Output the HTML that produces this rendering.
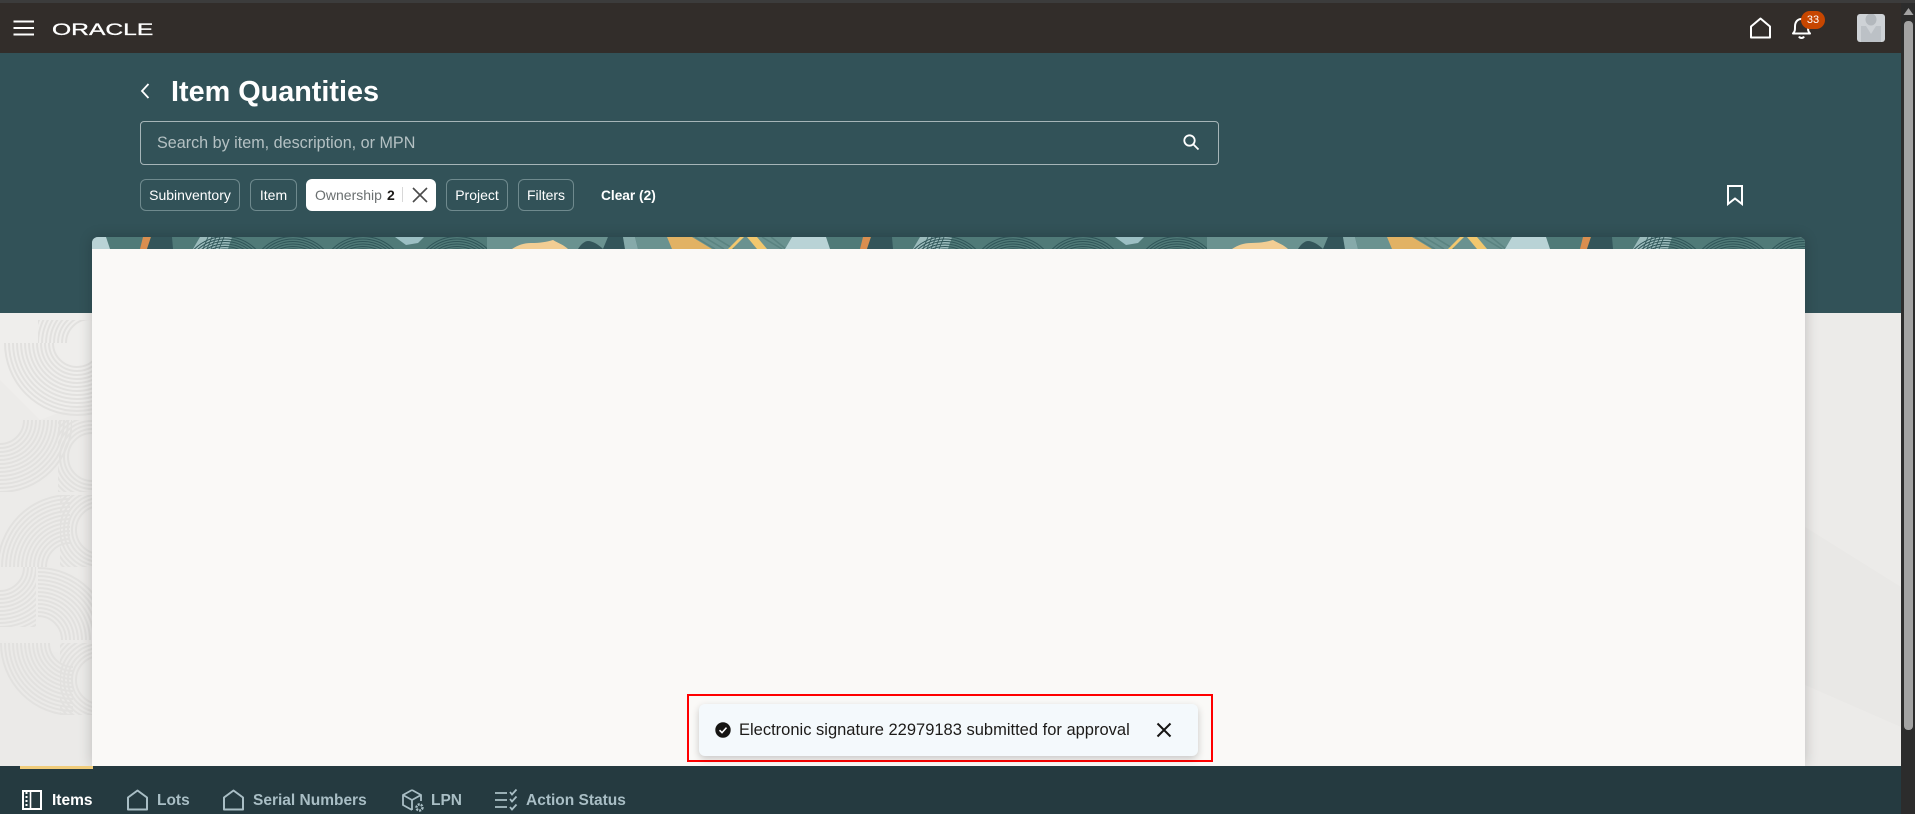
<!DOCTYPE html>
<html lang="en">
<head>
<meta charset="utf-8">
<title>Item Quantities</title>
<style>
html,body{margin:0;padding:0;width:1915px;height:814px;overflow:hidden;background:#ecebe9;font-family:"Liberation Sans",Arial,sans-serif}
.a{position:absolute;white-space:nowrap}
#stage{position:relative;width:1915px;height:814px;overflow:hidden}
.chip{position:absolute;top:179px;height:30px;border:1px solid #6f8a8e;border-radius:6px;box-sizing:content-box;color:#fff;font-size:14px;line-height:30px;text-align:center;white-space:nowrap}
.tab{position:absolute;top:790px;line-height:22px;font-size:15.5px;font-weight:bold;color:#a9bec5;white-space:nowrap}
</style>
</head>
<body>
<div id="stage">
  <!-- page background -->
  <div class="a" style="left:0;top:313px;width:1901px;height:453px;background:#ecebe9"></div>
  <svg class="a" style="left:0;top:313px" width="1901" height="453" viewBox="0 313 1901 453">
    <defs>
      <g id="rings" fill="none" stroke="#e2e1df" stroke-width="2">
        <circle r="24"/><circle r="28"/><circle r="32"/><circle r="36"/><circle r="40"/><circle r="44"/><circle r="48"/><circle r="52"/><circle r="56"/><circle r="60"/><circle r="64"/><circle r="68"/><circle r="72"/>
      </g>
      <clipPath id="l1"><rect x="0" y="343" width="77" height="75"/></clipPath>
      <clipPath id="l2"><rect x="0" y="420" width="72" height="72"/></clipPath>
      <clipPath id="l3"><rect x="0" y="495" width="70" height="72"/></clipPath>
      <clipPath id="l4"><rect x="0" y="567" width="36" height="60"/></clipPath>
      <clipPath id="l5"><rect x="38" y="567" width="54" height="73"/></clipPath>
      <clipPath id="l6"><rect x="0" y="643" width="73" height="72"/></clipPath>
      <clipPath id="l7"><rect x="38" y="320" width="54" height="23"/></clipPath>
      <clipPath id="l8"><rect x="58" y="420" width="34" height="72"/></clipPath>
      <clipPath id="l9"><rect x="60" y="495" width="32" height="72"/></clipPath>
      <clipPath id="l10"><rect x="60" y="643" width="32" height="72"/></clipPath>
      <clipPath id="l11"><rect x="77" y="343" width="15" height="75"/></clipPath>
    </defs>
    <polygon points="0,313 92,313 92,400 40,420 0,380" fill="#efeeec"/>
    <polygon points="0,640 92,660 92,766 0,766" fill="#ebeae8"/>
    <polygon points="1805,527 1901,587 1901,727 1805,685" fill="#e9e8e6"/>
    <g clip-path="url(#l1)"><use href="#rings" x="77" y="343"/></g>
    <g clip-path="url(#l2)"><use href="#rings" x="0" y="420"/></g>
    <g clip-path="url(#l3)"><use href="#rings" x="70" y="567"/></g>
    <g clip-path="url(#l4)"><use href="#rings" x="0" y="567"/></g>
    <g clip-path="url(#l5)"><use href="#rings" x="38" y="640"/></g>
    <g clip-path="url(#l6)"><use href="#rings" x="73" y="643"/></g>
    <g clip-path="url(#l7)"><use href="#rings" x="90" y="343"/></g>
    <g clip-path="url(#l8)"><use href="#rings" x="92" y="457"/></g>
    <g clip-path="url(#l9)"><use href="#rings" x="100" y="530"/></g>
    <g clip-path="url(#l10)"><use href="#rings" x="100" y="680"/></g>
    <g clip-path="url(#l11)"><use href="#rings" x="77" y="343"/></g>
  </svg>

  <!-- teal band and header -->
  <div class="a" style="left:0;top:53px;width:1901px;height:260px;background:#325258"></div>
  <div class="a" style="left:0;top:3px;width:1901px;height:50px;background:#322d2a"></div>
  <div class="a" style="left:0;top:0;width:1915px;height:3px;background:#3c3c3c"></div>

  <!-- hamburger -->
  <svg class="a" style="left:13px;top:20px" width="22" height="16" viewBox="0 0 22 16"><path d="M0.5 1.5H21M0.5 8H21M0.5 14.5H21" stroke="#fff" stroke-width="2" fill="none"/></svg>
  <!-- logo -->
  <svg class="a" style="left:52px;top:19px" width="104" height="19" viewBox="0 0 104 19"><text x="0" y="16" font-family="'Liberation Sans',sans-serif" font-size="17" fill="#fff" stroke="#fff" stroke-width="0.3" transform="scale(1.45 1)">ORACLE</text></svg>

  <!-- header icons -->
  <svg class="a" style="left:1749px;top:16px" width="24" height="24" viewBox="0 0 24 24"><path d="M2 21.5V10.5L11.5 2.5L21 10.5V21.5Z" fill="none" stroke="#fff" stroke-width="2" stroke-linejoin="round"/></svg>
  <svg class="a" style="left:1790px;top:16px" width="24" height="24" viewBox="0 0 24 24"><path d="M3 17.5C5 15.5 5 14 5 10.5C5 6 7.5 3 11.5 3C15.5 3 18 6 18 10.5C18 14 18 15.5 20 17.5Z" fill="none" stroke="#fff" stroke-width="2" stroke-linejoin="round"/><path d="M9 20.5C10 22.5 13 22.5 14 20.5" fill="none" stroke="#fff" stroke-width="2"/></svg>
  <div class="a" style="left:1801px;top:11px;width:24px;height:18px;border-radius:9px;background:#c74600;color:#fff;font-size:11px;line-height:18px;text-align:center">33</div>
  <svg class="a" style="left:1857px;top:14px" width="28" height="28" viewBox="0 0 28 28"><rect width="28" height="28" rx="3" fill="#ced2d6"/><ellipse cx="14" cy="5.5" rx="5.5" ry="6" fill="#b3b8bd"/><path d="M4 12H9L14 20L19 12H24V28H4Z" fill="#bcc1c6"/></svg>

  <!-- scrollbar -->
  <div class="a" style="left:1901px;top:3px;width:14px;height:811px;background:#2c2c2c"></div>
  <div class="a" style="left:1904px;top:21px;width:9px;height:709px;background:#a3a3a3;border-radius:4px"></div>
  <svg class="a" style="left:1903px;top:8px" width="11" height="8" viewBox="0 0 11 8"><path d="M5.5 0L10.5 7H0.5Z" fill="#a3a3a3"/></svg>

  <!-- title -->
  <svg class="a" style="left:139px;top:82px" width="12" height="18" viewBox="0 0 12 18"><path d="M9.5 2L3 9L9.5 16" fill="none" stroke="#fff" stroke-width="1.8"/></svg>
  <div class="a" style="left:171px;top:75px;font-size:28.8px;line-height:34px;font-weight:bold;color:#fff">Item Quantities</div>

  <!-- search -->
  <div class="a" style="left:140px;top:121px;width:1077px;height:42px;border:1px solid #a6b5b8;border-radius:4px"></div>
  <div class="a" style="left:157px;top:132px;font-size:16.15px;line-height:22px;color:#b4c1c3">Search by item, description, or MPN</div>
  <svg class="a" style="left:1182px;top:133px" width="18" height="18" viewBox="0 0 18 18"><circle cx="7.5" cy="7.5" r="5.2" fill="none" stroke="#fff" stroke-width="1.8"/><path d="M11.5 11.5L16.5 16.5" stroke="#fff" stroke-width="1.8"/></svg>

  <!-- chips -->
  <div class="chip" style="left:140px;width:98px">Subinventory</div>
  <div class="chip" style="left:250px;width:45px">Item</div>
  <div class="a" style="left:306px;top:179px;width:130px;height:32px;background:#fff;border-radius:6px"></div>
  <div class="a" style="left:315px;top:179px;font-size:14px;line-height:32px;color:#6a6f70">Ownership</div>
  <div class="a" style="left:387px;top:179px;font-size:14px;line-height:32px;color:#1d1b19;font-weight:bold">2</div>
  <div class="a" style="left:402px;top:187px;width:1px;height:15px;background:#d8d8d8"></div>
  <svg class="a" style="left:411px;top:186px" width="18" height="18" viewBox="0 0 18 18"><path d="M2 2L16 16M16 2L2 16" stroke="#4b4b4b" stroke-width="1.6" fill="none"/></svg>
  <div class="chip" style="left:446px;width:60px">Project</div>
  <div class="chip" style="left:518px;width:54px">Filters</div>
  <div class="a" style="left:601px;top:180px;font-size:13.7px;line-height:32px;font-weight:bold;color:#fff">Clear (2)</div>
  <svg class="a" style="left:1726px;top:184px" width="18" height="22" viewBox="0 0 18 22"><path d="M2 2H16V20L9 14.5L2 20Z" fill="none" stroke="#fff" stroke-width="2"/></svg>

  <!-- card -->
  <div class="a" style="left:92px;top:237px;width:1713px;height:529px;background:#faf9f7;border-radius:6px 6px 0 0;box-shadow:0 0 14px rgba(0,0,0,.2)"></div>
  <svg class="a" style="left:92px;top:237px" width="1713" height="12" viewBox="92 237 1713 12">
    <defs>
      <clipPath id="bn"><path d="M92 249V243a6 6 0 0 1 6-6H1799a6 6 0 0 1 6 6V249Z"/></clipPath>
      <g id="fp" fill="none" stroke="#2f5558" stroke-width="1">
        <circle r="31"/><circle r="33.5"/><circle r="36"/><circle r="38.5"/><circle r="41"/><circle r="43.5"/>
      </g>
      <g id="tile">
        <rect x="92" y="237" width="720" height="12" fill="#507a78"/>
        <polygon points="72,237 106,237 110,249 65,249" fill="#b9d3d6"/>
        <polygon points="143,237 151,237 147,249 140,249" fill="#d98e4f"/>
        <polygon points="151,237 172,237 173,249 147,249" fill="#33555a"/>
        <polygon points="200,237 232,237 228,249 193,249" fill="#9cbcbd"/>
        <g stroke="#3f6668" stroke-width="1"><path d="M203 249L208 237M207 249L212 237M211 249L216 237M215 249L220 237M219 249L224 237"/></g>
        <use href="#fp" x="225" y="280"/>
        <use href="#fp" x="293" y="280"/>
        <use href="#fp" x="363" y="280"/>
        <polygon points="395,237 424,237 418,243 406,245" fill="#9cc0c4"/>
        <use href="#fp" x="457" y="280"/>
        <polygon points="487,237 608,237 603,249 487,249" fill="#6a9290"/>
        <path d="M512 249C518 245 524 243 531 243C540 243 546 242 553 240C558 243 564 245 568 249Z" fill="#f2cd93"/>
        <path d="M578 249C581 244 585 241 588 241C593 241 599 245 603 249Z" fill="#33555a"/>
        <polygon points="608,237 623,237 625,249 603,249" fill="#33555a"/>
        <polygon points="623,237 635,237 638,249 625,249" fill="#86aaaa"/>
        <polygon points="635,237 792,237 785,249 638,249" fill="#6a9290"/>
        <g stroke="#5a8381" stroke-width="1.6"><path d="M695 237L715 249M704 237L724 249M714 237L734 249M762 237L782 249M771 237L786 249"/></g>
        <polygon points="667,237 692,237 712,249 672,249" fill="#e2b264"/>
        <polygon points="740,237 744,237 732,249 728,249" fill="#f2c76e"/>
        <polygon points="747,237 757,237 767,249 757,249" fill="#f2c76e"/>
      </g>
    </defs>
    <g clip-path="url(#bn)">
      <use href="#tile"/>
      <use href="#tile" x="720"/>
      <use href="#tile" x="1440"/>
    </g>
  </svg>

  <!-- toast -->
  <div class="a" style="left:687px;top:694px;width:522px;height:64px;border:2px solid #f00"></div>
  <div class="a" style="left:699px;top:704px;width:499px;height:52px;background:#f4f9fc;border-radius:6px;box-shadow:0 3px 8px rgba(0,0,0,.2)"></div>
  <svg class="a" style="left:715px;top:722px" width="16" height="16" viewBox="0 0 16 16"><circle cx="8" cy="8" r="7.7" fill="#161513"/><path d="M4.5 8.2L7 10.6L11.5 5.6" fill="none" stroke="#fff" stroke-width="1.6"/></svg>
  <div class="a" style="left:739px;top:719px;font-size:16.5px;line-height:22px;color:#1d1b19">Electronic signature 22979183 submitted for approval</div>
  <svg class="a" style="left:1156px;top:722px" width="16" height="16" viewBox="0 0 16 16"><path d="M1.5 1.5L14.5 14.5M14.5 1.5L1.5 14.5" stroke="#161513" stroke-width="2" fill="none"/></svg>

  <!-- footer nav -->
  <div class="a" style="left:0;top:766px;width:1901px;height:48px;background:#253a40"></div>
  <div class="a" style="left:20px;top:766px;width:73px;height:3px;background:#f0cc7a"></div>
  <svg class="a" style="left:21px;top:789px" width="22" height="22" viewBox="0 0 22 22"><rect x="2" y="2" width="18" height="18" fill="none" stroke="#fff" stroke-width="2"/><path d="M9.5 2V20" stroke="#fff" stroke-width="1.6"/><path d="M5.5 3V19" stroke="#fff" stroke-width="2" stroke-dasharray="2 2"/></svg>
  <div class="tab" style="left:52px;color:#fff">Items</div>
  <svg class="a" style="left:126px;top:788px" width="24" height="24" viewBox="0 0 24 24"><path d="M2 21.5V9.5L11.5 2.5L21 9.5V21.5Z" fill="none" stroke="#a9bec5" stroke-width="2" stroke-linejoin="round"/></svg>
  <div class="tab" style="left:157px">Lots</div>
  <svg class="a" style="left:222px;top:788px" width="24" height="24" viewBox="0 0 24 24"><path d="M2 21.5V9.5L11.5 2.5L21 9.5V21.5Z" fill="none" stroke="#a9bec5" stroke-width="2" stroke-linejoin="round"/></svg>
  <div class="tab" style="left:253px">Serial Numbers</div>
  <svg class="a" style="left:401px;top:788px" width="25" height="25" viewBox="0 0 25 25" fill="none" stroke="#a9bec5" stroke-width="1.8"><path d="M11 2L20 7V13M11 2L2 7V17L11 22M2 7L11 12L20 7M11 12V22"/><circle cx="18.5" cy="19.5" r="3" stroke-width="2.4" stroke-dasharray="2 1"/></svg>
  <div class="tab" style="left:431px">LPN</div>
  <svg class="a" style="left:495px;top:788px" width="23" height="24" viewBox="0 0 23 24" fill="none" stroke="#a9bec5" stroke-width="1.8"><path d="M0 5H12M0 12H12M0 19H12"/><path d="M15 4L17 6.5L21.5 1.5M15 11L17 13.5L21.5 8.5M15 19L17 21.5L21.5 16.5"/></svg>
  <div class="tab" style="left:526px">Action Status</div>
</div>
</body>
</html>
